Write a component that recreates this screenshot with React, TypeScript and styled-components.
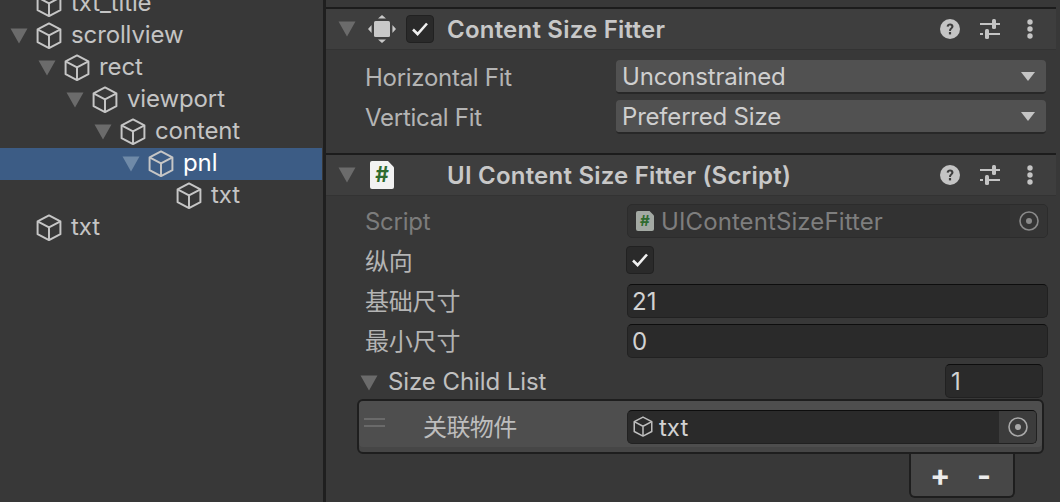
import styled, { createGlobalStyle } from "styled-components";

const Global = createGlobalStyle`
  html, body {
    margin: 0;
    padding: 0;
    background: #383838;
    overflow: hidden;
  }
  * {
    box-sizing: border-box;
  }
`;

const tree = [
  { name: "txt_title", depth: 0, open: false },
  { name: "scrollview", depth: 0, open: true },
  { name: "rect", depth: 1, open: true },
  { name: "viewport", depth: 2, open: true },
  { name: "content", depth: 3, open: true },
  { name: "pnl", depth: 4, open: true, selected: true },
  { name: "txt", depth: 5, open: false },
  { name: "txt", depth: 0, open: false },
];

const CubeIcon = ({ size = 26, color = "#c6c6c6" }: { size?: number; color?: string }) => (
  <svg width={size} height={size * 1.06} viewBox="0 0 26 28" fill="none" stroke={color} strokeWidth={2} strokeLinejoin="round">
    <path d="M13 1.5 24.6 7.5V20.5L13 26.5 1.4 20.5V7.5Z" />
    <path d="M1.4 7.5 13 13.5 24.6 7.5M13 13.5V26.5" />
  </svg>
);

const Arrow = ({ color = "#6b6b6b" }: { color?: string }) => (
  <svg width={18} height={16} viewBox="0 0 18 16">
    <path d="M0.5 0.5H17.5L9 15.5Z" fill={color} />
  </svg>
);

const HelpIcon = () => (
  <svg width={20} height={20} viewBox="0 0 20 20">
    <circle cx={10} cy={10} r={10} fill="#c4c4c4" />
    <path d="M6.6 7.6C6.8 5.6 8.2 4.6 10.1 4.6 12.1 4.6 13.5 5.8 13.5 7.5 13.5 9.6 11 9.9 10.9 12H9.1C9 9.2 11.3 9 11.3 7.6 11.3 6.9 10.8 6.4 10 6.4 9.2 6.4 8.8 6.9 8.7 7.8Z" fill="#3e3e3e" />
    <rect x={8.9} y={13} width={2.2} height={2.4} fill="#3e3e3e" />
  </svg>
);

const SlidersIcon = () => (
  <svg width={20} height={20} viewBox="0 0 20 20" fill="#c4c4c4">
    <rect x={0} y={4} width={12} height={2} />
    <rect x={13} y={4} width={7} height={2} />
    <rect x={12} y={0} width={4} height={10} rx={1.5} />
    <rect x={0} y={14} width={3} height={2} />
    <rect x={5} y={14} width={15} height={2} />
    <rect x={5} y={10} width={4} height={10} rx={1.5} />
  </svg>
);

const KebabIcon = () => (
  <svg width={6} height={20} viewBox="0 0 6 20" fill="#c4c4c4">
    <circle cx={3} cy={3} r={2.7} />
    <circle cx={3} cy={10} r={2.7} />
    <circle cx={3} cy={17} r={2.7} />
  </svg>
);

const TargetIcon = () => (
  <svg width={20} height={20} viewBox="0 0 20 20" fill="none">
    <circle cx={10} cy={10} r={9} stroke="#a8a8a8" strokeWidth={1.6} />
    <circle cx={10} cy={10} r={3} fill="#a8a8a8" />
  </svg>
);

const LayoutIcon = () => (
  <svg width={28} height={28} viewBox="0 0 28 28" fill="#c8c8c8">
    <rect x={6} y={6} width={16} height={16} rx={1.5} />
    <path d="M10 3.6 14 0 18 3.6ZM10 24.4 14 28 18 24.4ZM3.6 10 0 14 3.6 18ZM24.4 10 28 14 24.4 18Z" />
  </svg>
);

const ScriptIcon = ({ small }: { small?: boolean }) => (
  <ScriptSheet $small={small}>#</ScriptSheet>
);

const CheckMark = () => (
  <svg width={16} height={14} viewBox="0 0 16 14" fill="none" stroke="#f0f0f0" strokeWidth={2.6}>
    <path d="M1 7.5 5.6 12 15 1.5" />
  </svg>
);

const HeaderActions = () => (
  <Actions>
    <HelpIcon />
    <SlidersIcon />
    <KebabIcon />
  </Actions>
);

const App = () => {
  return (
    <Page>
      <Global />
      <Hierarchy>
        {tree.map((node, i) => (
          <TreeRow key={i} $selected={node.selected} $depth={node.depth}>
            <ArrowSlot>{node.open && <Arrow color={node.selected ? "#6f8aa8" : "#6b6b6b"} />}</ArrowSlot>
            <CubeIcon />
            <TreeLabel $selected={node.selected}>{node.name}</TreeLabel>
          </TreeRow>
        ))}
      </Hierarchy>

      <Inspector>
        <Section>
          <ComponentHeader>
            <ArrowSlot>
              <Arrow />
            </ArrowSlot>
            <HeaderIcon>
              <LayoutIcon />
            </HeaderIcon>
            <CheckBox $header>
              <CheckMark />
            </CheckBox>
            <HeaderTitle>Content Size Fitter</HeaderTitle>
            <HeaderActions />
          </ComponentHeader>
          <Body>
            <Row>
              <Label $width={251}>Horizontal Fit</Label>
              <Dropdown>
                Unconstrained
                <DropCaret />
              </Dropdown>
            </Row>
            <Row>
              <Label $width={251}>Vertical Fit</Label>
              <Dropdown>
                Preferred Size
                <DropCaret />
              </Dropdown>
            </Row>
          </Body>
        </Section>

        <Section>
          <ComponentHeader>
            <ArrowSlot>
              <Arrow />
            </ArrowSlot>
            <HeaderIcon>
              <ScriptIcon />
            </HeaderIcon>
            <HeaderSpacer />
            <HeaderTitle>UI Content Size Fitter (Script)</HeaderTitle>
            <HeaderActions />
          </ComponentHeader>
          <ScriptBody>
            <Row>
              <Label $width={262} $dim>Script</Label>
              <ObjectField>
                <ScriptIcon small />
                <span>UIContentSizeFitter</span>
                <Picker $dim>
                  <TargetIcon />
                </Picker>
              </ObjectField>
            </Row>
            <Row>
              <Label $width={261} $cjk>纵向</Label>
              <RowCheck>
                <CheckMark />
              </RowCheck>
            </Row>
            <Row>
              <Label $width={262} $cjk>基础尺寸</Label>
              <InputField>21</InputField>
            </Row>
            <Row>
              <Label $width={262} $cjk>最小尺寸</Label>
              <InputField>0</InputField>
            </Row>
            <ListHead>
              <ListTitle>
                <Arrow />
                Size Child List
              </ListTitle>
              <SizeField>1</SizeField>
            </ListHead>
            <ListElement>
              <DragHandle />
              <ElementLabel>关联物件</ElementLabel>
              <ElementField>
                <CubeIcon size={20} color="#bdbdbd" />
                <ElementName>txt</ElementName>
                <Picker>
                  <TargetIcon />
                </Picker>
              </ElementField>
            </ListElement>
            <ListFooter>
              <FooterSign>+</FooterSign>
              <FooterSign>-</FooterSign>
            </ListFooter>
          </ScriptBody>
        </Section>
      </Inspector>
    </Page>
  );
};

export default App;

const Page = styled.div`
  width: 1060px;
  height: 502px;
  display: flex;
  overflow: hidden;
  background: #383838;
  font-family: Inter, "Noto Sans CJK SC", sans-serif;
  font-size: 24px;
`;

const Hierarchy = styled.div`
  width: 322px;
  flex: none;
  margin-top: -12px;
`;

const TreeRow = styled.div<{ $selected?: boolean; $depth: number }>`
  height: 32px;
  display: flex;
  align-items: center;
  padding-left: ${(p) => 10 + p.$depth * 28}px;
  background: ${(p) => (p.$selected ? "#3c5c85" : "transparent")};
`;

const ArrowSlot = styled.div`
  width: 26px;
  height: 16px;
  flex: none;
  display: flex;
`;

const TreeLabel = styled.span<{ $selected?: boolean }>`
  margin-left: 9px;
  margin-bottom: 3px;
  letter-spacing: -0.12px;
  color: ${(p) => (p.$selected ? "#ffffff" : "#c4c4c4")};
`;

const Inspector = styled.div`
  width: 730px;
  margin-left: 4px;
  box-shadow: -3px 0 0 #1f1f1f;
  flex: none;
  padding-top: 7px;
  display: flex;
  flex-direction: column;
`;

const Section = styled.div`
  border-top: 2px solid #1c1c1c;
`;

const ComponentHeader = styled.div`
  height: 41px;
  display: flex;
  align-items: center;
  padding-left: 12px;
  padding-right: 23px;
  background: #3e3e3e;
  border-bottom: 1px solid #333333;
`;

const HeaderIcon = styled.div`
  width: 28px;
  flex: none;
  display: flex;
  justify-content: center;
  margin-left: 4px;
`;

const HeaderSpacer = styled.div`
  width: 28px;
  flex: none;
  margin-left: 10px;
`;

const HeaderTitle = styled.div`
  margin-left: 13px;
  font-weight: 600;
  letter-spacing: 0.22px;
  color: #c8c8c8;
  flex: 1;
  white-space: nowrap;
`;

const Actions = styled.div`
  display: flex;
  align-items: center;
  gap: 20px;

  svg:last-child {
    margin-left: 7px;
  }
`;

const CheckBox = styled.div<{ $header?: boolean }>`
  width: 28px;
  height: 28px;
  flex: none;
  margin-left: ${(p) => (p.$header ? "10px" : "0")};
  border-radius: 4px;
  background: #2a2a2a;
  border: 1px solid #212121;
  display: flex;
  align-items: center;
  justify-content: center;
`;

const RowCheck = styled(CheckBox)`
  margin-top: -2px;
`;

const ScriptSheet = styled.div<{ $small?: boolean }>`
  width: ${(p) => (p.$small ? "18px" : "24px")};
  height: ${(p) => (p.$small ? "20px" : "28px")};
  background: ${(p) => (p.$small ? "#a3a9a3" : "#f2f2f2")};
  clip-path: polygon(0 0, 75% 0, 100% 22%, 100% 100%, 0 100%);
  border-radius: 2px;
  color: #2f6b2f;
  font-weight: 700;
  font-size: ${(p) => (p.$small ? "15px" : "21px")};
  line-height: ${(p) => (p.$small ? "20px" : "28px")};
  text-align: center;
  flex: none;
`;

const Body = styled.div`
  padding: 10px 10px 19px 39px;
  display: flex;
  flex-direction: column;
  gap: 6px;
`;

const ScriptBody = styled.div`
  padding: 8px 8px 0 39px;
  display: flex;
  flex-direction: column;
  gap: 6px;
`;

const Row = styled.div`
  height: 34px;
  display: flex;
  align-items: center;
`;

const Label = styled.div<{ $width: number; $dim?: boolean; $cjk?: boolean }>`
  width: ${(p) => p.$width}px;
  flex: none;
  letter-spacing: ${(p) => (p.$cjk ? "-0.2px" : "-0.28px")};
  margin-bottom: ${(p) => (p.$cjk ? "4px" : "0")};
  color: ${(p) => (p.$dim ? "#7c7c7c" : "#b4b4b4")};
`;

const Dropdown = styled.div`
  flex: 1;
  height: 34px;
  position: relative;
  display: flex;
  align-items: center;
  padding-left: 6px;
  background: #515151;
  border-radius: 4px;
  border-bottom: 2px solid #282828;
  letter-spacing: -0.2px;
  color: #cfcfcf;
`;

const DropCaret = styled.i`
  position: absolute;
  right: 11px;
  top: 12px;
  width: 0;
  height: 0;
  border-left: 7px solid transparent;
  border-right: 7px solid transparent;
  border-top: 9px solid #c4c4c4;
`;

const InputField = styled.div`
  flex: 1;
  height: 34px;
  display: flex;
  align-items: center;
  padding-left: 4px;
  background: #2a2a2a;
  border: 1px solid #212121;
  border-top-color: #0d0d0d;
  border-radius: 5px;
  color: #d2d2d2;
`;

const ObjectField = styled.div`
  flex: 1;
  height: 34px;
  display: flex;
  align-items: center;
  gap: 7px;
  padding-left: 8px;
  background: #323232;
  border: 1px solid #2c2c2c;
  border-radius: 5px;
  letter-spacing: 0.1px;
  color: #7e7e7e;
  overflow: hidden;
`;

const Picker = styled.div<{ $dim?: boolean }>`
  width: 37px;
  align-self: stretch;
  margin-left: auto;
  display: flex;
  align-items: center;
  justify-content: center;
  background: ${(p) => (p.$dim ? "#363636" : "#3c3c3c")};
  opacity: ${(p) => (p.$dim ? 0.75 : 1)};
`;

const ListHead = styled.div`
  height: 34px;
  display: flex;
  align-items: center;
  margin-left: -5px;
  padding-right: 5px;
`;

const ListTitle = styled.div`
  flex: 1;
  display: flex;
  align-items: center;
  gap: 10px;
  letter-spacing: -0.08px;
  color: #c0c0c0;

  svg {
    margin-top: 4px;
  }
`;

const SizeField = styled(InputField)`
  flex: none;
  width: 98px;
  padding-left: 5px;
`;

const ListElement = styled.div`
  height: 55px;
  margin: -5px 4px 0 -8px;
  display: flex;
  align-items: center;
  position: relative;
  padding-left: 64px;
  padding-right: 5px;
  background: #4e4e4e;
  box-shadow: inset 0 -5px 0 #464646;
  border: 2px solid #1e1e1e;
  border-radius: 6px;
`;

const DragHandle = styled.div`
  position: absolute;
  left: 5px;
  top: 17px;
  width: 21px;
  height: 9px;
  border-top: 2px solid #6a6a6a;
  border-bottom: 2px solid #6a6a6a;
`;

const ElementLabel = styled.div`
  width: 204px;
  flex: none;
  letter-spacing: -0.6px;
  margin-bottom: 2px;
  color: #bdbdbd;
`;

const ElementField = styled(InputField)`
  gap: 6px;
  padding: 0;
  padding-left: 5px;
  overflow: hidden;
`;

const ElementName = styled.span`
  margin-top: 2px;
`;

const ListFooter = styled.div`
  width: 106px;
  height: 44px;
  margin-top: -6px;
  margin-left: 544px;
  padding: 0 19px;
  display: flex;
  align-items: center;
  justify-content: space-between;
  background: #474747;
  border: 2px solid #1e1e1e;
  border-top: 0;
  border-radius: 0 0 6px 6px;
`;

const FooterSign = styled.span`
  color: #ececec;
  font-weight: 700;
  font-size: 30px;
  line-height: 30px;
  width: 20px;
  text-align: center;
`;
